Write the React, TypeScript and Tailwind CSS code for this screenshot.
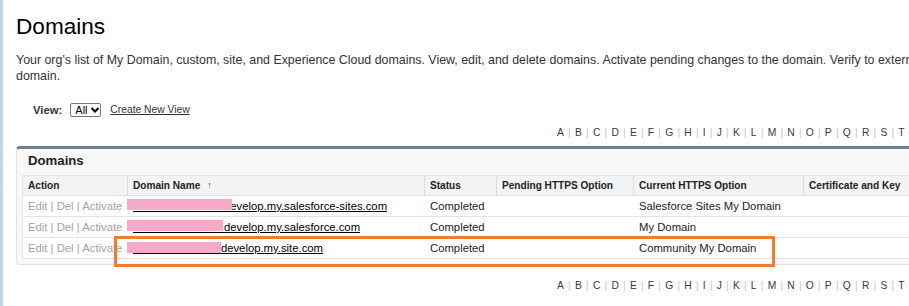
const letters = "ABCDEFGHIJKLMNOPQRSTUVWXYZ".split("").concat(["Other", "All"]);

function Rolodex() {
  return (
    <div className="flex items-center text-[10.3px] leading-none text-[#3a3a3a] whitespace-nowrap">
      {letters.map((l, i) => (
        <span key={l} className="flex items-center">
          {i > 0 && <span className="px-[4.2px] text-[#c4c4c4]">|</span>}
          <span>{l}</span>
        </span>
      ))}
    </div>
  );
}

const rows = [
  {
    pad: 29,
    text: "develop.my.salesforce-sites.com",
    current: "Salesforce Sites My Domain",
    pink: "top-[3px] h-[11px] w-[105px]",
  },
  {
    pad: 29,
    text: "develop.my.salesforce.com",
    current: "My Domain",
    pink: "top-[3px] h-[11px] w-[96px]",
  },
  {
    pad: 28,
    text: "develop.my.site.com",
    current: "Community My Domain",
    pink: "top-[4px] h-[11px] w-[94px]",
  },
];

export default function App() {
  return (
    <div className="relative flex h-[306px] w-[909px] overflow-hidden bg-white font-['Liberation_Sans',Arial,sans-serif]">
      <div className="w-[3px] shrink-0 bg-[#c3d5ec]" />
      <div className="w-[1200px] shrink-0 pl-[13px]">
        <h1 className="pt-[14px] text-[22.6px] font-normal leading-[26px] text-black">Domains</h1>
        <p className="mt-[12px] text-[12.4px] leading-[16px] text-[#333]">
          <span className="whitespace-nowrap">
            Your org's list of My Domain, custom, site, and Experience Cloud domains. View, edit, and delete domains.
            Activate pending changes to the domain. Verify to externally serve this
          </span>
          <br />
          domain.
        </p>

        <div className="ml-[17px] mt-[19px] flex h-[14px] items-center">
          <span className="text-[11.3px] font-bold text-[#333]">View:</span>
          <div className="ml-[8px] flex h-[14px] w-[31px] items-center rounded-[2px] border border-[#767676] bg-white pl-[4px]">
            <span className="text-[11px] leading-none text-black">All</span>
            <svg width="10" height="8" viewBox="0 0 10 8" className="ml-[2px]">
              <polyline points="1.5,2 5,5.5 8.5,2" fill="none" stroke="#000" strokeWidth="2" />
            </svg>
          </div>
          <a className="ml-[9px] text-[10.3px] leading-none text-[#333] underline">Create New View</a>
        </div>

        <div className="ml-[541px] mt-[11px]">
          <Rolodex />
        </div>

        <div className="mt-[8px] w-[1000px] rounded-[4px] border border-t-[3px] border-[#e0e3e5] border-t-[#6f7c96] bg-[#f8f8f8] pb-[5px]">
          <div className="h-[26px] pl-[11px] pt-[4px] text-[13.2px] font-bold leading-[16px] text-[#222]">Domains</div>
          <div className="ml-[5px] border-l border-t border-[#e0e3e5] bg-white">
            <div className="flex h-[20px] border-b border-[#e0e3e5] bg-[#f2f3f3] text-[10.1px] font-bold text-[#222]">
              <div className="flex w-[105px] shrink-0 items-center border-r border-[#dcdcdc] pl-[5px]">Action</div>
              <div className="flex w-[297px] shrink-0 items-center border-r border-[#dcdcdc] pl-[5px]">
                Domain Name<span className="ml-[7px] text-[9px] font-normal text-[#444]">↑</span>
              </div>
              <div className="flex w-[72px] shrink-0 items-center border-r border-[#dcdcdc] pl-[5px]">Status</div>
              <div className="flex w-[137px] shrink-0 items-center border-r border-[#dcdcdc] pl-[5px]">Pending HTTPS Option</div>
              <div className="flex w-[170px] shrink-0 items-center border-r border-[#dcdcdc] pl-[5px]">Current HTTPS Option</div>
              <div className="flex w-[200px] shrink-0 items-center border-r border-[#dcdcdc] pl-[5px]">Certificate and Key</div>
            </div>
            {rows.map((r, i) => (
              <div key={i} className="flex h-[21px] border-b border-[#e3e3e3] text-[11.3px] text-[#222]">
                <div className="flex w-[105px] shrink-0 items-center whitespace-nowrap pl-[5px] text-[#a3a3a3]">
                  Edit | Del | Activate
                </div>
                <div className="relative flex w-[297px] shrink-0 items-center whitespace-nowrap pl-[5px]">
                  <a className="text-black underline decoration-black">
                    {"\u00a0".repeat(r.pad)}
                    {r.text}
                  </a>
                  <span className={`absolute left-[-1px] bg-[#f7a9ca] ${r.pink}`} />
                </div>
                <div className="flex w-[72px] shrink-0 items-center pl-[5px]">Completed</div>
                <div className="flex w-[137px] shrink-0 items-center pl-[5px]" />
                <div className="flex w-[170px] shrink-0 items-center whitespace-nowrap pl-[5px]">{r.current}</div>
                <div className="flex w-[200px] shrink-0 items-center pl-[5px]" />
              </div>
            ))}
          </div>
        </div>

        <div className="ml-[541px] mt-[16px]">
          <Rolodex />
        </div>
      </div>

      <div className="absolute left-[114px] top-[236px] h-[31px] w-[661px] border-[3px] border-[#ed7d31]" />
    </div>
  );
}
